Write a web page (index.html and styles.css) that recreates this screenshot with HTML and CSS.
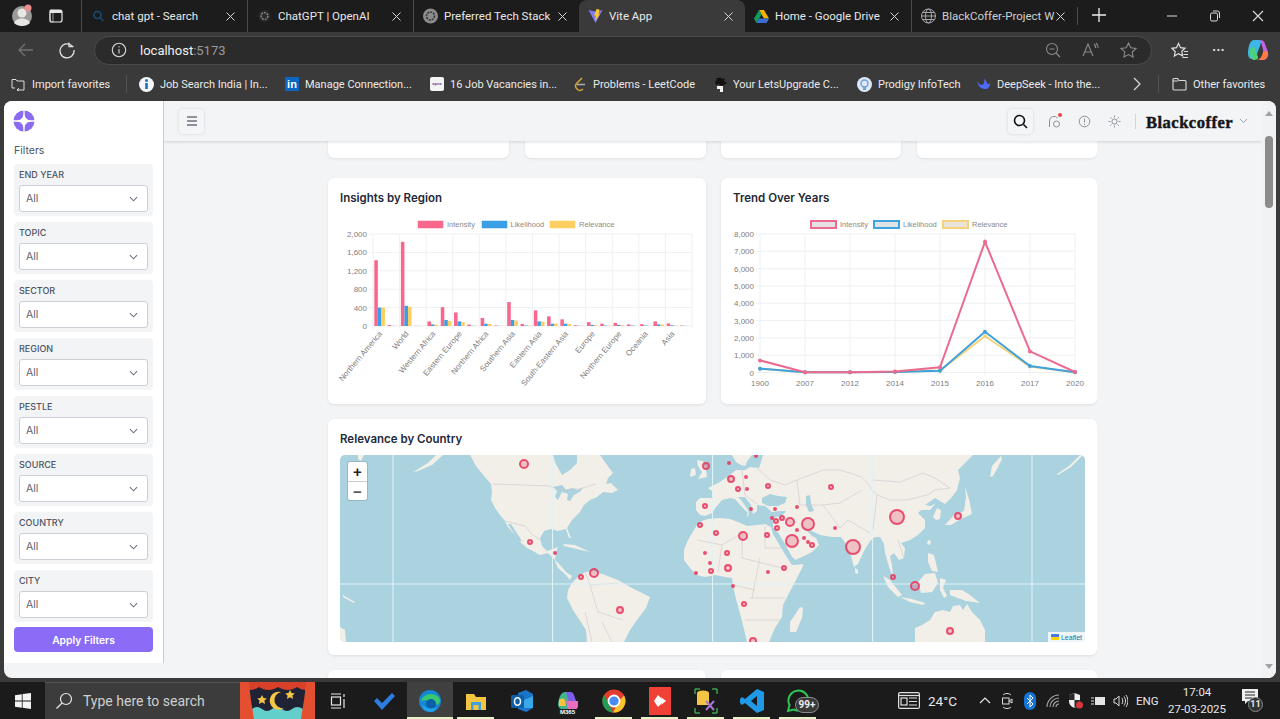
FILE: index.html
```html
<!DOCTYPE html>
<html lang="en">
<head>
<meta charset="utf-8">
<title>Vite App</title>
<link rel="stylesheet" href="styles.css">
</head>
<body>
<div class="tabbar">
  <div class="profile">
    <svg width="22" height="24" viewBox="0 0 22 24"><circle cx="11" cy="13" r="10" fill="#9a9a98"/><circle cx="11" cy="10" r="4.5" fill="#e8e6e4"/><path d="M3 20c2-6 14-6 16 0-4 4-12 4-16 0z" fill="#e8e6e4"/><circle cx="17" cy="5" r="3.5" fill="#ee8d8d"/></svg>
  </div>
  <div class="tabs-btn"><svg width="14" height="14" viewBox="0 0 14 14"><rect x="1" y="1" width="12" height="12" rx="2" fill="none" stroke="#e6e6e6" stroke-width="1.2"/><rect x="1" y="1" width="12" height="3" fill="#e6e6e6"/><rect x="1" y="1" width="3" height="12" fill="none" stroke="#e6e6e6" stroke-width=".6"/></svg></div>
  <div class="tab">
    <svg class="fav" width="14" height="14" viewBox="0 0 14 14"><circle cx="6" cy="6" r="3.5" fill="none" stroke="#1b4a70" stroke-width="1.6"/><path d="M9 9l3 3" stroke="#1b4a70" stroke-width="1.6"/></svg>
    <span class="tab-title">chat gpt - Search</span><svg class="tab-x" width="9" height="9" viewBox="0 0 9 9"><path d="M.5 .5l8 8M8.500 .5l-8 8" stroke="#d8d8d8"/></svg>
  </div>
  <div class="tab">
    <svg class="fav" width="14" height="14" viewBox="0 0 14 14"><circle cx="7" cy="7" r="6" fill="#2b2b2b"/><circle cx="7" cy="7" r="3.4" fill="none" stroke="#8c8c8c" stroke-width="1.4" stroke-dasharray="2 1"/></svg>
    <span class="tab-title">ChatGPT | OpenAI</span><svg class="tab-x" width="9" height="9" viewBox="0 0 9 9"><path d="M.5 .5l8 8M8.500 .5l-8 8" stroke="#d8d8d8"/></svg>
  </div>
  <div class="tab">
    <svg class="fav" width="16" height="16" viewBox="0 0 16 16"><circle cx="8" cy="8" r="7.5" fill="#8b8b8b"/><circle cx="8" cy="8" r="4" fill="none" stroke="#333" stroke-width="1.5" stroke-dasharray="2 1"/></svg>
    <span class="tab-title">Preferred Tech Stack</span><svg class="tab-x" width="9" height="9" viewBox="0 0 9 9"><path d="M.5 .5l8 8M8.500 .5l-8 8" stroke="#d8d8d8"/></svg>
  </div>
  <div class="tab tab-active">
    <svg class="fav" width="16" height="16" viewBox="0 0 16 16"><path d="M1 2l7 1.4L15 2 8 15z" fill="#7c7cf0"/><path d="M9 1l3 .6-1 5 1.500-.4L7.500 13l1-5.500-2 .4z" fill="#ffc82a"/></svg>
    <span class="tab-title">Vite App</span><svg class="tab-x" width="9" height="9" viewBox="0 0 9 9"><path d="M.5 .5l8 8M8.500 .5l-8 8" stroke="#d8d8d8"/></svg>
  </div>
  <div class="tab tab-drive">
    <svg class="fav" width="16" height="15" viewBox="0 0 16 15"><path d="M5.500 1h5l5 8.500h-5z" fill="#f4b400"/><path d="M5.500 1L.5 9.500 3 14l5-8.500z" fill="#0f9d58"/><path d="M3 14h10l2.500-4.500h-10z" fill="#3a6fd8"/></svg>
    <span class="tab-title">Home - Google Drive</span><svg class="tab-x" width="9" height="9" viewBox="0 0 9 9"><path d="M.5 .5l8 8M8.500 .5l-8 8" stroke="#d8d8d8"/></svg>
  </div>
  <div class="tab">
    <svg class="fav" width="16" height="16" viewBox="0 0 16 16" fill="none" stroke="#a8a8a8" stroke-width="1"><circle cx="8" cy="8" r="7"/><ellipse cx="8" cy="8" rx="3" ry="7"/><path d="M1 8h14M2 4.500h12M2 11.500h12"/></svg>
    <span class="tab-title tab-fade">BlackCoffer-Project W</span><svg class="tab-x" width="9" height="9" viewBox="0 0 9 9"><path d="M.5 .5l8 8M8.500 .5l-8 8" stroke="#d8d8d8"/></svg>
  </div>
  <div class="new-tab"><svg width="16" height="16" viewBox="0 0 16 16"><path d="M8 1v14M1 8h14" stroke="#eee" stroke-width="1.300"/></svg></div>
  <div class="win-btns">
    <svg width="12" height="12" viewBox="0 0 12 12"><path d="M1 6h10" stroke="#ddd"/></svg>
    <svg width="12" height="12" viewBox="0 0 12 12" fill="none" stroke="#ddd"><rect x="1.500" y="3" width="7" height="8" rx="1.500"/><path d="M4 1h4.500a2 2 0 0 1 2 2v5"/></svg>
    <svg width="12" height="12" viewBox="0 0 12 12"><path d="M1 1l10 10M11 1L1 11" stroke="#ddd" stroke-width="1.100"/></svg>
  </div>
</div>

<div class="toolbar">
  <svg class="tool-ico back" width="18" height="18" viewBox="0 0 18 18" fill="none" stroke="#717171" stroke-width="1.300"><path d="M16 9H2M8 3L2 9l6 6"/></svg>
  <svg class="tool-ico reload" width="18" height="18" viewBox="0 0 18 18" fill="none" stroke="#e2e2e2" stroke-width="1.300"><path d="M14.500 5.500A7 7 0 1 0 16 9"/><path d="M11 1.500v4.200h4.500"/></svg>
  <div class="address">
    <svg width="16" height="16" viewBox="0 0 16 16" fill="none" stroke="#d8d8d8" stroke-width="1.100"><circle cx="8" cy="8" r="6.700"/><path d="M8 7v4.500M8 4.300v1.300"/></svg>
    <span class="url"><b>localhost</b>:5173</span>
    <span class="addr-spacer"></span>
    <svg class="addr-ico" width="16" height="16" viewBox="0 0 16 16" fill="none" stroke="#8a8a8a" stroke-width="1.100"><circle cx="7" cy="7" r="5.500"/><path d="M11 11l4 4M4.500 7h5"/></svg>
    <svg class="addr-ico" width="17" height="16" viewBox="0 0 17 16" fill="none" stroke="#8a8a8a" stroke-width="1.100"><path d="M1 14L6 2l5 12M3 10h6M12 2a4 4 0 0 1 1.500 4M14 1a6 6 0 0 1 2 5"/></svg>
    <svg class="addr-ico" width="17" height="16" viewBox="0 0 17 16" fill="none" stroke="#8a8a8a" stroke-width="1.100"><path d="M8.500 1l2.300 4.700 5.200.7-3.800 3.600.9 5.100-4.600-2.500L3.900 15l.9-5.100L1 6.400l5.200-.7z"/></svg>
  </div>
  <svg class="tool-ico favs" width="18" height="17" viewBox="0 0 18 17" fill="none" stroke="#e2e2e2" stroke-width="1.200"><path d="M7.500 1.500l2 4.200 4.500.6-3.200 3 .8 4.500-4.100-2.200L3.400 14l.8-4.500L1 6.300l4.500-.6zM13 9.500h4M12.500 12.500h4.500M11.500 15.500h5.500"/></svg>
  <span class="more">···</span>
  <svg class="copilot" width="22" height="22" viewBox="0 0 22 22"><path d="M7 1h5c3 0 2 3 1 6l-3 8c-1 3-3 5-5 5-3 0-4-3-4-6 0-6 2-13 6-13z" fill="#3fb6e8"/><path d="M3 12c0-4 3-5 5-3l3 9c1 2-2 3-4 3-3 0-4-4-4-9z" fill="#4cd07d"/><path d="M13 1c3 0 4 1 5 4l3 8c1 4-1 8-5 8h-5c2 0 4-2 5-5 1-5-1-9-3-15z" fill="#c264e8"/><path d="M10 21h6c3 0 5-3 5-7 0-2-3-3-5-1-1 4-3 8-6 8z" fill="#ff7a45"/></svg>
</div>

<div class="bookmarks">
  <div class="bm bm-import"><svg width="14" height="14" viewBox="0 0 14 14" fill="none" stroke="#dcdcdc" stroke-width="1"><path d="M1 11V2.500h4l1 1.500h7v4M1 11h3M13 8v5H6M8 11l-2 2 2 1"/></svg><span>Import favorites</span></div>
  <i class="bm-sep"></i>
  <div class="bm bm-job"><svg width="15" height="15" viewBox="0 0 15 15"><circle cx="7.500" cy="7.500" r="7.500" fill="#f4f6fb"/><path d="M7.500 6v6" stroke="#1a73c8" stroke-width="2.600"/><circle cx="7.500" cy="3.600" r="1.500" fill="#1a73c8"/></svg><span>Job Search India | In...</span></div>
  <div class="bm bm-in"><span class="in-logo">in</span><span>Manage Connection...</span></div>
  <div class="bm bm-apna"><span class="apna-logo">apna</span><span>16 Job Vacancies in...</span></div>
  <div class="bm bm-lc"><svg width="13" height="15" viewBox="0 0 13 15" fill="none" stroke-width="1.600"><path d="M8 1L3 6c-2 2-2 4 0 6s4 2 6 0" stroke="#d8a13a"/><path d="M3 7.500h8" stroke="#aaa"/></svg><span>Problems - LeetCode</span></div>
  <div class="bm bm-lu"><svg width="14" height="15" viewBox="0 0 14 15"><path d="M7 0l2 2 3-1-1 3 3 2-3 2-3 1-2-2-3 1-1-3 2-2-1-2 3 0z" fill="#111"/><path d="M4 9h6v6H7v-3H4z" fill="#f2f2f2"/></svg><span>Your LetsUpgrade C...</span></div>
  <div class="bm bm-pr"><svg width="15" height="15" viewBox="0 0 15 15"><circle cx="7.500" cy="7.500" r="7.500" fill="#dfe8f5"/><circle cx="7.500" cy="6.500" r="3.500" fill="none" stroke="#6f9fd8" stroke-width="1.400"/><path d="M6 10h3v3H6z" fill="#6f9fd8"/></svg><span>Prodigy InfoTech</span></div>
  <div class="bm bm-ds"><svg width="15" height="13" viewBox="0 0 15 13"><path d="M1 3c1 5 4 8 8 8 3 0 5-2 5-6-1 1-2 1-3 1 0-2-1-4-3-5 1 3 0 5-2 6C4 7 2 5 1 3z" fill="#4d6bfe"/></svg><span>DeepSeek - Into the...</span></div>
  <svg class="bm-more" width="10" height="14" viewBox="0 0 10 14"><path d="M2 1l6 6-6 6" fill="none" stroke="#d5d5d5" stroke-width="1.300"/></svg>
  <i class="bm-sep bm-sep2"></i>
  <div class="bm bm-other"><svg width="15" height="14" viewBox="0 0 15 14" fill="none" stroke="#dcdcdc" stroke-width="1.100"><path d="M1 12V2.500a1 1 0 0 1 1-1h3.500L7 3.500h6a1 1 0 0 1 1 1V12a1 1 0 0 1-1 1H2a1 1 0 0 1-1-1zM1 4h5"/></svg><span>Other favorites</span></div>
</div>

<div class="page">
  <aside class="sidebar">
    <svg class="logo" width="22" height="22" viewBox="0 0 22 22"><circle cx="11" cy="11" r="10.500" fill="#8b6cf0"/><path d="M11 3c.9 5 3 7.100 8 8-5 .9-7.100 3-8 8-.9-5-3-7.100-8-8 5-.9 7.100-3 8-8z" fill="#fff"/><path d="M0 11h22M11 0v22" stroke="#fff" stroke-width="1.300"/></svg>
    <div class="filters-title">Filters</div>
    <div class="filter-list">
      <div class="filter"><label>End Year</label><div class="select">All<svg width="9" height="6" viewBox="0 0 10 6"><path d="M1 1l4 4 4-4" fill="none" stroke="#6b7280" stroke-width="1.200"/></svg></div></div>
      <div class="filter"><label>Topic</label><div class="select">All<svg width="9" height="6" viewBox="0 0 10 6"><path d="M1 1l4 4 4-4" fill="none" stroke="#6b7280" stroke-width="1.200"/></svg></div></div>
      <div class="filter"><label>Sector</label><div class="select">All<svg width="9" height="6" viewBox="0 0 10 6"><path d="M1 1l4 4 4-4" fill="none" stroke="#6b7280" stroke-width="1.200"/></svg></div></div>
      <div class="filter"><label>Region</label><div class="select">All<svg width="9" height="6" viewBox="0 0 10 6"><path d="M1 1l4 4 4-4" fill="none" stroke="#6b7280" stroke-width="1.200"/></svg></div></div>
      <div class="filter"><label>Pestle</label><div class="select">All<svg width="9" height="6" viewBox="0 0 10 6"><path d="M1 1l4 4 4-4" fill="none" stroke="#6b7280" stroke-width="1.200"/></svg></div></div>
      <div class="filter"><label>Source</label><div class="select">All<svg width="9" height="6" viewBox="0 0 10 6"><path d="M1 1l4 4 4-4" fill="none" stroke="#6b7280" stroke-width="1.200"/></svg></div></div>
      <div class="filter"><label>Country</label><div class="select">All<svg width="9" height="6" viewBox="0 0 10 6"><path d="M1 1l4 4 4-4" fill="none" stroke="#6b7280" stroke-width="1.200"/></svg></div></div>
      <div class="filter"><label>City</label><div class="select">All<svg width="9" height="6" viewBox="0 0 10 6"><path d="M1 1l4 4 4-4" fill="none" stroke="#6b7280" stroke-width="1.200"/></svg></div></div>
    </div>
    <button class="apply">Apply Filters</button>
  </aside>

  <div class="main">
    <header class="topbar">
      <div class="icon-btn menu-btn"><svg width="12" height="10" viewBox="0 0 12 10"><path d="M1 1h10M1 5h10M1 9h10" stroke="#6b7280" stroke-width="1.300"/></svg></div>
      <span class="top-spacer"></span>
      <div class="icon-btn search-btn"><svg width="15" height="15" viewBox="0 0 15 15" fill="none" stroke="#111" stroke-width="1.600"><circle cx="6.500" cy="6.500" r="5"/><path d="M10.500 10.500l3.500 3.500"/></svg></div>
      <div class="plain-ico notif"><svg width="13" height="13" viewBox="0 0 13 13" fill="none" stroke="#8a9099" stroke-width="1"><path d="M1.500 12V6a4.500 4.500 0 0 1 8-3"/><rect x="5.500" y="6" width="6" height="6" rx="3"/></svg><i class="dot"></i></div>
      <div class="plain-ico info"><svg width="13" height="13" viewBox="0 0 13 13" fill="none" stroke="#8a9099" stroke-width="1"><circle cx="6.500" cy="6.500" r="5.300"/><path d="M6.500 3.500v4M6.500 8.800v1"/></svg></div>
      <div class="plain-ico sun"><svg width="13" height="13" viewBox="0 0 13 13" fill="none" stroke="#8a9099" stroke-width="1"><circle cx="6.500" cy="6.500" r="2.600"/><path d="M6.500 .5v1.800M6.500 10.700v1.800M.5 6.500h1.800M10.700 6.500h1.800M2.300 2.300l1.200 1.200M9.500 9.500l1.200 1.200M2.300 10.700l1.200-1.200M9.500 3.500l1.200-1.200"/></svg></div>
      <i class="top-sep"></i>
      <div class="brand">Blackcoffer</div>
      <svg class="brand-chev" width="9" height="6" viewBox="0 0 9 6"><path d="M1 1l3.500 3.500L8 1" fill="none" stroke="#9ca3af" stroke-width="1"/></svg>
    </header>

    <div class="content">
      <div class="stats"><div class="card stat"></div><div class="card stat"></div><div class="card stat"></div><div class="card stat"></div></div>
      <div class="chart-row">
        <section class="card chart-card">
          <h2>Insights by Region</h2>
          <svg id="barChart" class="chart" width="354" height="190" viewBox="340 210 354 190"></svg>
        </section>
        <section class="card chart-card">
          <h2>Trend Over Years</h2>
          <svg id="lineChart" class="chart" width="352" height="190" viewBox="733 210 352 190"></svg>
        </section>
      </div>
      <section class="card map-card">
        <h2>Relevance by Country</h2>
        <div class="map">
          <svg id="mapSvg" class="map-svg" width="745" height="187" viewBox="340 455 745 187">
            <g class="land">
              <path d="M358 455L364 455L361 461L358 459ZM413 472L428 463L436 455L443 455L432 465L418 471ZM340 627L345 630L346 642L340 642ZM343 595L355 602L354 603L343 597ZM1057 474L1069 466L1080 455L1083 455L1071 467L1058 475Z"/>
              <path d="M470 455L476 466L484 476L491 484L492 492L491 500L495 508L500 515L505 521L508 527L514 534L520 542L527 548L533 551L540 555L548 553L553 558L560 565L566 572L572 576L570 580L565 574L558 568L555 561L556 552L558 547L553 549L547 551L542 546L540 538L544 531L551 529L558 531L566 529L569 538L571 538L567 528L572 520L580 512L584 505L590 500L597 497L603 492L612 493L618 490L611 483L606 484L608 478L613 473L607 465L600 455Z"/>
              <path d="M563 544L575 545L590 552L577 549L564 546Z"/>
              <path d="M568 590L572 583L578 577L585 572L594 571L605 575L618 580L630 587L650 597L646 608L637 620L630 630L624 642L587 642L586 630L573 610L567 598Z"/>
              <path d="M697 460L703 461L706 470L707 477L698 479L702 472L698 466ZM691 469L695 468L696 475L690 477ZM732 455L752 455L748 460L745 466L741 465L736 462Z"/>
              <path d="M763 455L761 462L759 468L750 467L745 470L736 470L731 474L727 477L720 482L712 486L708 488L713 492L713 498L700 498L696 502L696 510L700 515L705 516L712 513L716 507L722 500L730 498L735 499L741 506L748 513L746 517L749 515L748 510L741 500L738 497L745 497L751 505L753 514L757 511L757 505L765 506L772 512L780 511L786 511L782 516L775 517L773 522L773 527L779 534L785 544L791 555L795 560L802 557L812 552L819 545L816 538L812 536L807 531L799 527L812 531L820 535L832 537L841 537L846 544L851 556L854 567L858 564L864 551L870 541L875 537L880 537L884 544L885 553L890 570L893 576L892 565L890 556L894 553L899 560L904 558L905 548L901 543L910 540L918 535L925 528L925 520L918 513L921 510L930 510L936 503L931 506L925 505L935 498L945 504L952 497L957 490L960 478L958 470L965 463L973 455Z"/>
              <path d="M771 527L765 524L757 525L747 526L738 522L730 519L720 518L708 519L702 521L697 525L692 533L688 540L684 550L684 560L690 568L697 575L705 577L715 575L725 577L732 578L733 585L735 595L739 610L743 625L747 642L769 642L775 628L782 617L783 605L788 595L796 580L803 566L803 564L795 565L792 565L786 556L780 546L773 534Z"/>
              <path d="M790 632L790 622L800 607L803 608L802 618L796 632ZM855 568L858 570L858 574L855 573ZM937 508L941 510L940 519L936 520L933 517ZM945 525L955 514L964 511L966 497L965 487L969 499L972 514L961 519L951 525ZM990 477L992 466L1001 456L1002 459L997 469L993 476ZM928 540L931 541L930 545L927 544Z"/>
              <path d="M883 576L890 580L902 595L898 597L888 587ZM918 582L925 574L935 573L938 583L932 592L921 593ZM940 578L946 580L943 588L947 596L944 598L940 590ZM900 597L912 599L925 603L923 605L910 602ZM950 590L962 590L970 595L980 603L966 601L950 595ZM928 553L934 555L938 572L932 571L928 562Z"/>
              <path d="M915 628L922 625L930 620L935 612L943 610L950 612L953 606L960 605L963 610L967 604L972 612L980 620L985 630L985 642L915 642Z"/>
            </g>
            <g class="water">
              <path d="M553 455L577 455L577 463L570 470L562 475L558 468L555 462ZM553 487L562 485L566 490L572 488L578 490L583 487L581 491L574 495L570 501L567 500L568 494L562 492L558 500L555 497L557 491ZM508 524L511 524L522 541L519 542ZM762 498L770 494L778 496L787 497L785 503L778 506L768 506L762 503ZM806 496L810 495L811 503L814 511L809 512L806 505Z"/>
            </g>
            <g class="borders">
              <path d="M493 484L550 486L560 490L572 489L580 489L596 484M505 521L525 526L533 535L541 540M873 480L900 482L923 473L935 478L950 488L935 490L927 495L907 500L890 500L877 495L862 477L840 470L823 470L797 480M797 480L800 505M823 505L840 528L848 520L870 533M877 495L873 530M898 540L904 558M800 505L823 505L840 503L862 490M742 470L745 495M757 468L770 480L785 485L797 480M745 495L757 504M697 540L722 545L742 533M722 545L718 572M742 533L742 558L782 568M765 526L765 548L786 548M760 558L752 598M750 598L785 598M745 620L780 620M733 585L755 590M590 585L598 612L623 620M585 612L592 642M602 622L612 642M585 572L590 585L618 583"/>
            </g>
            <g class="tile-lines">
              <path d="M393 455v187M552.500 455v187M712.500 455v187M872.500 455v187M1032 455v187M340 584h745"/>
            </g>
            <g id="markers"></g>
          </svg>
          <div class="zoom-ctl"><span>+</span><span>−</span></div>
          <div class="attrib"><svg width="8" height="6" viewBox="0 0 8 6"><rect width="8" height="3" fill="#4c7be0"/><rect y="3" width="8" height="3" fill="#ffd500"/></svg><span>Leaflet</span></div>
        </div>
      </section>
      <div class="chart-row"><div class="card stub"></div><div class="card stub"></div></div>
    </div>
  </div>

  <div class="scrollbar">
    <svg width="8" height="5" viewBox="0 0 8 5"><path d="M0 5l4-5 4 5z" fill="#a3a3a3"/></svg>
    <i class="thumb"></i>
    <svg class="sb-down" width="8" height="5" viewBox="0 0 8 5"><path d="M0 0l4 5 4-5z" fill="#a3a3a3"/></svg>
  </div>
</div>

<footer class="taskbar">
  <div class="start"><svg width="16" height="16" viewBox="0 0 16 16" fill="#f4f4f4"><path d="M0 2.200l6.800-1v6.300H0zM7.600 1l8.400-1v7.500H7.600zM0 8.400h6.800v6.400L0 13.800zM7.600 8.400H16V16l-8.400-1.200z"/></svg></div>
  <div class="task-search"><svg width="18" height="18" viewBox="0 0 18 18" fill="none" stroke="#e8e8e8" stroke-width="1.200"><circle cx="11" cy="7" r="5.500"/><path d="M7 11l-5.500 5.500"/></svg><span>Type here to search</span></div>
  <svg class="theater" width="75" height="37" viewBox="0 0 75 37">
    <rect width="75" height="37" fill="#1f2334"/>
    <path d="M0 28c8 2 8 5 14 9h48c5-4 6-7 13-9v9H0z" fill="#5dc9c4"/>
    <path d="M12 27q5-4 10 0t10 0 10 0 10 0 11 0v10H12z" fill="#63cfca"/>
    <path d="M0 0h75v5c-7 4-12 4-18 0-6 4-12 4-19 0-6 4-13 4-19 0-6 4-13 4-19 0z" fill="#d8402a"/>
    <path d="M0 0h9c1 14 3 24 5 37H0zM75 0h-9c-1 14-3 24-5 37h14z" fill="#e4502f"/>
    <path d="M41 10a9 9 0 1 0 3 16 8 8 0 0 1-3-16z" fill="#f6c744"/>
    <path d="M22 13l1.500 3 3.300.4-2.400 2.200.6 3.300-3-1.600-3 1.600.6-3.300-2.400-2.200 3.300-.4zM50 8l1.500 3 3.300.4-2.400 2.200.6 3.300-3-1.600-3 1.600.6-3.300-2.400-2.200 3.300-.4z" fill="#f6c744"/>
  </svg>
  <div class="task-cell taskview"><svg width="16" height="16" viewBox="0 0 16 16" fill="none" stroke="#e8e8e8" stroke-width="1.200"><path d="M1 1h10M1 15h10"/><rect x="1.500" y="4" width="9" height="8"/><path d="M14 1v3M14 6v9"/></svg></div>
  <div class="task-cell running-none"><svg width="24" height="20" viewBox="0 0 24 20"><path d="M2 10l3-3 5 5L20 2l3 3-13 14z" fill="#2d7ce0"/></svg></div>
  <div class="task-cell active on"><svg width="24" height="24" viewBox="0 0 24 24"><circle cx="12" cy="12" r="11" fill="#1486d6"/><path d="M3 14C3 8 8 5 13 5c5 0 9 3 9 7 0 3-3 4-6 4-2 0-3-1-3-2 0-3-10-4-10 0z" fill="#36c96f"/><circle cx="13" cy="15" r="5" fill="#0c5fa8"/><path d="M13 23c-5 0-9-3-9-8 3 4 9 6 15 3-1 3-3 5-6 5z" fill="#1fa0e8"/></svg></div>
  <div class="task-cell on"><svg width="22" height="20" viewBox="0 0 22 20"><path d="M1 3h8l2 3h10v13H1z" fill="#f4c542"/><rect x="6" y="11" width="10" height="8" fill="#3fa0dc"/><rect x="8.500" y="14" width="5" height="5" fill="#f4c542"/></svg></div>
  <div class="task-cell"><svg width="24" height="22" viewBox="0 0 24 22"><path d="M8 3l8-3 7 4v14l-7 4-8-3z" fill="#1a74c8"/><path d="M14 10l9-4v12h-9z" fill="#37a8e8"/><rect x="1" y="5" width="13" height="13" rx="1.500" fill="#0f5fa8"/><ellipse cx="7.500" cy="11.500" rx="3" ry="3.800" fill="none" stroke="#fff" stroke-width="1.500"/></svg></div>
  <div class="task-cell m365"><svg width="24" height="18" viewBox="0 0 24 18"><path d="M9 0h5l4 18h-8C5 18 2 16 2 12 3 5 5 0 9 0z" fill="#3fb38a"/><path d="M10 0h4c3 0 4 2 5 6l3 8h-8z" fill="#7c5fe8"/><path d="M10 9h12v5c0 2-2 4-4 4h-6z" fill="#e86fc0"/><path d="M3 8c2-2 5-2 6 0l1 6H3z" fill="#f4c542"/></svg><b>M365</b></div>
  <div class="task-cell on"><svg width="24" height="24" viewBox="0 0 24 24"><circle cx="12" cy="12" r="11.500" fill="#e33b2e"/><path d="M22 6.500A11.500 11.500 0 0 1 11 23.500L17 12z" fill="#f7c52b"/><path d="M11 23.500A11.500 11.500 0 0 1 2 6l5 9z" fill="#1e9d55"/><circle cx="12" cy="12" r="5.500" fill="#4a8af4" stroke="#fff" stroke-width="1.800"/></svg></div>
  <div class="task-cell on"><span class="red-app"><svg width="14" height="14" viewBox="0 0 14 14"><path d="M5 1l6 6-6 6-4-6z" fill="#fff"/><path d="M8 3l5 4-5 4 2-4z" fill="#fff"/></svg></span></div>
  <div class="task-cell on"><svg width="24" height="26" viewBox="0 0 24 26"><path d="M1 1v5M1 1h5M23 1v5M23 1h-5M1 25v-5M1 25h5M23 25v-5M23 25h-5" stroke="#3fa34d" stroke-width="1.500" fill="none"/><ellipse cx="9" cy="5" rx="6" ry="2.500" fill="#f4c542"/><rect x="3" y="5" width="12" height="12" fill="#f4c542"/><path d="M12 13l8 9M20 13l-8 9" stroke="#a878d8" stroke-width="2"/></svg></div>
  <div class="task-cell on"><svg width="24" height="24" viewBox="0 0 24 24"><path d="M17 0l7 3v18l-7 3L5 14l-3 2-2-2v-4l2-2 3 2zM17 7l-6 5 6 5z" fill="#1f9ae8"/></svg></div>
  <div class="task-cell on whatsapp"><svg width="24" height="24" viewBox="0 0 24 24"><path d="M2 22l1.500-6A10 10 0 1 1 8 20.500z" fill="none" stroke="#2dc653" stroke-width="2"/></svg><span class="wa-badge">99+</span></div>
  <span class="task-spacer"></span>
  <div class="tray">
    <svg class="tray-news" width="22" height="17" viewBox="0 0 22 17" fill="none" stroke="#e0e0e0" stroke-width="1.200"><rect x=".6" y=".6" width="20.800" height="15.800" rx="1.500"/><path d="M.6 3.500h20.800"/><rect x="3" y="6" width="6" height="7"/><path d="M11 6h8M11 9.500h8M11 13h8"/></svg>
    <span class="temp">24°C</span>
    <svg class="caret" width="12" height="7" viewBox="0 0 12 7"><path d="M1 6l5-5 5 5" fill="none" stroke="#e8e8e8" stroke-width="1.200"/></svg>
    <svg class="t-ico ti-meet" width="12" height="18" viewBox="0 0 12 18" fill="none" stroke="#ddd" stroke-width="1"><path d="M2 3c2-2 6-2 8 0M2 15c2 2 6 2 8 0"/><rect x="1.500" y="6" width="6.500" height="6"/><path d="M8 9l3-2v4z"/></svg>
    <svg class="t-ico ti-bt" width="12" height="18" viewBox="0 0 12 18"><rect width="12" height="18" rx="6" fill="#1574d4"/><path d="M3 6l6 6-3 3V3l3 3-6 6" fill="none" stroke="#fff"/></svg>
    <svg class="t-ico ti-wifi" width="14" height="14" viewBox="0 0 14 14" fill="none" stroke="#aaa" stroke-width="1.100"><path d="M1 13A12 12 0 0 1 13 1M4 13a9 9 0 0 1 9-9M7 13a6 6 0 0 1 6-6M10 13a3 3 0 0 1 3-3"/></svg>
    <svg class="t-ico ti-shield" width="15" height="17" viewBox="0 0 15 17"><path d="M6.500 1L12 3v6c0 4-3 6-5.500 7C4 15 1 13 1 9V3z" fill="#f0f0f0"/><path d="M6.500 1v7H1V3zM6.500 8H12c0 4-3 7-5.500 8z" fill="#2a2a2a"/><circle cx="11.500" cy="13" r="3.500" fill="#d9363e"/></svg>
    <svg class="t-ico ti-batt" width="16" height="12" viewBox="0 0 16 12"><rect x="5" y="2" width="10" height="8" fill="#e4e4e4"/><path d="M1 3h3M1 6h3M1 9h3" stroke="#ddd"/></svg>
    <svg class="t-ico ti-vol" width="15" height="14" viewBox="0 0 15 14" fill="none" stroke="#ddd" stroke-width="1"><path d="M1 5h2l3-3v10L3 9H1zM9 4c1 2 1 4 0 6M11 2.500c2 3 2 6 0 9M13 1c2.500 4 2.500 8 0 12"/></svg>
    <span class="lang">ENG</span>
    <div class="clock"><span>17:04</span><span>27-03-2025</span></div>
    <div class="notify"><svg width="16" height="15" viewBox="0 0 16 15"><path d="M0 0h16v12H6l-3 3v-3H0z" fill="#efefef"/><path d="M3 3h10M3 6h10M3 9h7" stroke="#222"/></svg><span class="notify-badge">11</span></div>
  </div>
</footer>
<script src="app.js"></script>
</body>
</html>
```

FILE: styles.css
```css
* { box-sizing: border-box; }
html, body { margin: 0; height: 100%; overflow: hidden; }
body {
  width: 1280px; height: 719px; display: flex; flex-direction: column;
  background: #3a3a3a; font-family: Inter, "Noto Sans", sans-serif; color: #1f2937;
}

/* browser tabs */
.tabbar { height: 32px; background: #1c1c1c; display: flex; align-items: center; color: #e8e8e8; font: 11.5px Roboto, sans-serif; flex: none; }
.profile { width: 44px; padding-left: 11px; display: flex; align-self: flex-start; padding-top: 3px; }
.tabs-btn { width: 37px; padding-left: 5px; display: flex; }
.tab { width: 166px; height: 32px; display: flex; align-items: center; padding: 0 12px 0 8px; border-left: 1px solid #4a4a4a; background-clip: padding-box; }
.tab .fav { flex: none; width: 17px; margin-right: 5px; }
.tab-title { flex: 1; white-space: nowrap; overflow: hidden; }
.tab-fade { color: #cfcfcf; }
.tab-x { flex: none; }
.tab-active { background: #3a3a3a; border-radius: 8px 8px 0 0; border-left: 0; }
.tab-active + .tab { border-left: 0; }
.new-tab { width: 42px; height: 18px; display: flex; justify-content: center; border-left: 1px solid #4a4a4a; }
.win-btns { margin-left: auto; display: flex; gap: 31px; padding-right: 16px; }

/* browser toolbar */
.toolbar { height: 36px; background: #3a3a3a; display: flex; align-items: center; flex: none; }
.tool-ico { flex: none; }
.back { margin-left: 17px; }
.reload { margin-left: 23px; }
.address { margin-left: 18px; width: 1058px; height: 29px; border-radius: 15px; background: #2b2b2b; border: 1px solid #4c4c4c; display: flex; align-items: center; padding-left: 16px; padding-right: 14px; }
.url { margin-left: 13px; font: 13px Roboto, sans-serif; color: #9a9a9a; }
.url b { color: #f0f0f0; font-weight: 400; }
.addr-spacer { flex: 1; }
.addr-ico { margin-left: 21px; }
.favs { margin-left: 19px; }
.more { margin-left: 23px; color: #ddd; font: bold 14px Roboto, sans-serif; width: 14px; }
.copilot { margin-left: 21px; }

/* bookmarks */
.bookmarks { height: 32px; background: #3a3a3a; display: flex; align-items: center; color: #eaeaea; font: 11px Roboto, sans-serif; flex: none; padding-left: 11px; }
.bm { display: flex; align-items: center; gap: 6px; white-space: nowrap; flex: none; }
.bm-import { width: 100px; gap: 7px; }
.bm-sep { width: 1px; height: 18px; background: #555; margin-left: 15px; flex: none; }
.bm-job { margin-left: 12px; width: 146px; }
.bm-in { width: 145px; }
.bm-apna { width: 144px; }
.bm-lc { width: 139px; }
.bm-lu { width: 144px; }
.bm-pr { width: 119px; }
.bm-ds { width: 156px; }
.bm-more { flex: none; }
.bm-sep2 { margin-left: 16px; }
.bm-other { margin-left: 13px; }
.in-logo { width: 14px; height: 14px; background: #0a66c2; color: #fff; font: bold 11px "Liberation Sans", sans-serif; text-align: center; line-height: 14px; border-radius: 1px; }
.apna-logo { width: 14px; height: 14px; background: #f4f4f4; color: #6b3fa0; font: bold 4px "Liberation Sans", sans-serif; text-align: center; line-height: 14px; border-radius: 2px; }

/* page */
.page { height: 577px; margin: 1px 4px 0 4px; flex: none; background: #f3f4f6; border-radius: 8px; display: flex; overflow: hidden; }
.sidebar { width: 160px; height: 562px; background: #fff; border-right: 1px solid #c9cbd0; padding: 9px 10px 0 10px; flex: none; display: flex; flex-direction: column; }
.logo { display: block; margin-left: -1px; }
.filters-title { font-size: 10.5px; color: #4b5563; margin-top: 12px; line-height: 14px; }
.filter-list { margin-top: 6px; display: flex; flex-direction: column; gap: 6px; }
.filter { height: 52px; background: #f3f4f6; border-radius: 4px; padding: 4px 5px 0; }
.filter label { display: block; font-size: 9px; font-weight: 500; text-transform: uppercase; color: #4b5563; line-height: 13px; height: 17px; }
.select { height: 27px; background: #fff; border: 1px solid #ccd0d6; border-radius: 3px; display: flex; align-items: center; justify-content: space-between; padding: 0 9px 0 6px; font-size: 10.500px; color: #5b6470; }
.apply { margin-top: 5px; height: 25px; width: 139px; border: 0; border-radius: 4px; background: #8b6cf6; color: #fff; font: 600 10.300px Inter, sans-serif; flex: none; }

.main { width: 1098px; flex: none; display: flex; flex-direction: column; overflow: hidden; }
.topbar { height: 40px; flex: none; background: #f3f4f6; box-shadow: 0 1px 3px rgba(0,0,0,.14); display: flex; align-items: center; padding: 0 14px 0 15px; position: relative; z-index: 2; }
.icon-btn { width: 25px; height: 25px; border-radius: 4px; background: #f4f5f7; box-shadow: 0 0 3px rgba(0,0,0,.14); display: flex; align-items: center; justify-content: center; }
.top-spacer { flex: 1; }
.plain-ico { width: 30px; display: flex; justify-content: center; position: relative; }
.notif { margin-left: 6px; }
.dot { position: absolute; width: 4px; height: 4px; border-radius: 50%; background: #ef4444; top: -2px; left: 19px; }
.top-sep { width: 1px; height: 15px; background: #d1d5db; margin-left: 6px; }
.brand { margin-left: 10px; padding-top: 3px; font: 700 16.500px "Liberation Serif", serif; letter-spacing: .5px; color: #161616; width: 90px; -webkit-text-stroke: .45px #161616; }
.brand-chev { margin-left: 3px; }

.content { flex: 1; padding-left: 164px; width: 933px; display: flex; flex-direction: column; gap: 15px; overflow: hidden; }
.card { background: #fff; border-radius: 6px; box-shadow: 0 1px 3px rgba(0,0,0,.09); }
.stats { display: grid; grid-template-columns: 181px 181px 180px 180px; gap: 15.500px; margin-bottom: 5px; }
.stat { height: 17px; border-radius: 0 0 6px 6px; }
.chart-row { display: grid; grid-template-columns: 378px 376px; gap: 15px; flex: none; }
.chart-card { height: 226px; padding: 12px 12px 4px; }
h2 { margin: 0; font-size: 11.500px; line-height: 16px; font-weight: 600; color: #1f2937; }
.chart { display: block; margin-top: 4px; overflow: visible; }
.map-card { height: 236px; padding: 12px; flex: none; }
.map { position: relative; width: 745px; height: 187px; margin-top: 8px; border-radius: 5px; overflow: hidden; background: #aad3df; }
.map-svg { display: block; }
.stub { height: 20px; }
.land path { fill: #f2efe9; }
.water path { fill: #aad3df; }
.borders path { fill: none; stroke: #cfc6cd; stroke-width: .6; }
.tile-lines path { fill: none; stroke: #dff3f7; stroke-width: 1; }
.zoom-ctl { position: absolute; left: 8px; top: 7px; width: 19px; border-radius: 2px; background: #fff; box-shadow: 0 0 0 1px rgba(0,0,0,.12); display: flex; flex-direction: column; }
.zoom-ctl span { height: 19px; font: bold 15px/19px "Liberation Sans", sans-serif; text-align: center; color: #222; }
.zoom-ctl span + span { border-top: 1px solid #ccc; color: #555; }
.attrib { position: absolute; right: 0; bottom: 0; height: 10px; padding: 0 3px; display: flex; align-items: center; gap: 2px; background: rgba(255,255,255,.8); font: 7px "Liberation Sans", sans-serif; color: #0078a8; }

.tick { font: 8px "Liberation Sans", sans-serif; fill: #808080; }
.legend { font: 7.500px "Liberation Sans", sans-serif; fill: #8a8a8a; }

.scrollbar { flex: 1; position: relative; background: #f1f2f4; display: flex; flex-direction: column; align-items: center; padding-top: 10px; }
.thumb { display: block; width: 8px; height: 72px; border-radius: 4px; background: #8b8b8b; margin-top: 20px; }
.sb-down { margin-top: auto; margin-bottom: 9px; }

/* taskbar */
.taskbar { height: 37px; margin-top: 4px; background: #1b1b1b; flex: none; display: flex; align-items: stretch; color: #e8e8e8; }
.start { width: 45px; display: flex; align-items: center; justify-content: center; }
.task-search { width: 195px; background: #3c3c3c; border-top: 1px solid #555; display: flex; align-items: center; padding-left: 10px; font: 14px Roboto, sans-serif; color: #cfcfcf; gap: 10px; }
.theater { flex: none; }
.task-cell { width: 46px; position: relative; display: flex; align-items: center; justify-content: center; flex: none; }
.taskview { margin-right: 1px; }
.running-none { margin-left: -1px; }
.task-cell.active { background: #404040; }
.task-cell.on::after { content: ""; position: absolute; left: 4px; right: 5px; bottom: 0; height: 2px; background: #e6f4c4; }
.task-cell.active.on::after { left: 0; right: 0; }
.m365 b { position: absolute; left: 14px; bottom: 4px; font: bold 6px "Liberation Sans", sans-serif; color: #fff; background: #222; padding: 0 1px; }
.red-app { width: 22px; height: 28px; background: #ef4135; display: flex; align-items: center; justify-content: center; }
.wa-badge { position: absolute; left: 20px; top: 15px; width: 24px; height: 16px; border-radius: 8px; background: #3a3a3a; border: 1px solid #8a8a8a; font: bold 10px/14px Roboto, sans-serif; text-align: center; color: #eee; }
.task-spacer { flex: 1; }
.tray { display: flex; align-items: center; padding-right: 20px; font: 12.500px Roboto, sans-serif; }
.tray-news { flex: none; }
.temp { margin-left: 8px; width: 31px; font-size: 13.500px; flex: none; }
.caret { margin-left: 20px; flex: none; }
.t-ico { flex: none; }
.ti-meet { margin-left: 10px; }
.ti-bt { margin-left: 11px; }
.ti-wifi { margin-left: 10px; }
.ti-shield { margin-left: 7.500px; }
.ti-batt { margin-left: 7.500px; }
.ti-vol { margin-left: 6.500px; }
.lang { margin-left: 8.500px; width: 24px; font-size: 11.500px; flex: none; }
.clock { margin-left: 1px; width: 72px; display: flex; flex-direction: column; align-items: center; gap: 4px; font-size: 11.500px; line-height: 13px; flex: none; }
.notify { margin-left: 7px; position: relative; width: 20px; padding-bottom: 6px; flex: none; padding-left: 2px; }
.notify-badge { position: absolute; left: 8px; top: 8px; width: 15px; height: 15px; border-radius: 50%; background: #333; border: 1px solid #888; font: bold 9px/13px Roboto, sans-serif; text-align: center; }
```

FILE: app.js
```js
const NS = 'http://www.w3.org/2000/svg';
function add(parent, tag, attrs, text) {
  const n = document.createElementNS(NS, tag);
  for (const k in attrs) n.setAttribute(k, attrs[k]);
  if (text !== undefined) n.textContent = text;
  parent.appendChild(n);
  return n;
}
const GRID = '#eef0f2';

function legend(svg, items) {
  for (const it of items) {
    add(svg, 'rect', { x: it.x + (it.hollow ? 1 : 0), y: 221, width: it.w - (it.hollow ? 2 : 0), height: 7, fill: it.fill, stroke: it.stroke, 'stroke-width': it.hollow ? 2 : .5 });
    add(svg, 'text', { x: it.tx, y: 227, class: 'legend' }, it.label);
  }
}

/* Insights by Region */
(function () {
  const svg = document.getElementById('barChart');
  const L = 373, R = 692, T = 234, B = 326, MAX = 2000;
  const y = v => B - v * (B - T) / MAX;
  const data = [
    [1430, 400, 400], [20, 4, 4], [1830, 440, 420], [4, 2, 2], [100, 35, 30], [410, 130, 110],
    [295, 100, 85], [30, 5, 5], [175, 50, 45], [10, 3, 3], [520, 130, 120], [45, 10, 10],
    [340, 100, 95], [210, 50, 50], [145, 50, 45], [15, 5, 5], [85, 25, 20], [50, 10, 10],
    [70, 25, 20], [35, 10, 5], [40, 10, 5], [100, 35, 30], [55, 15, 10], [10, 3, 3]
  ];
  const labels = ['Northern America', 'World', 'Western Africa', 'Eastern Europe', 'Northern Africa', 'Southern Asia', 'Eastern Asia', 'South-Eastern Asia', 'Europe', 'Northern Europe', 'Oceania', 'Asia'];
  const colors = ['#f9688c', '#3a9fe4', '#fdcf62'];
  for (let i = 0; i <= 5; i++) {
    const v = i * 400, yy = y(v);
    add(svg, 'line', { x1: L - 4, x2: R, y1: yy, y2: yy, stroke: GRID });
    add(svg, 'text', { x: L - 6, y: yy + 3, 'text-anchor': 'end', class: 'tick' }, v.toLocaleString('en-US'));
  }
  const step = (R - L) / 24;
  for (let i = 0; i <= 12; i++) {
    const x = L + i * step * 2;
    add(svg, 'line', { x1: x, x2: x, y1: T, y2: B + 3, stroke: GRID });
  }
  data.forEach((vals, i) => {
    vals.forEach((v, s) => {
      add(svg, 'rect', { x: L + i * step + 1.3 + s * 3.55, y: y(v), width: 3.55, height: B - y(v), fill: colors[s] });
    });
  });
  labels.forEach((t, i) => {
    const x = L + (i * 2 + .5) * step + 3, yy = 334;
    add(svg, 'text', { x, y: yy, 'text-anchor': 'end', transform: `rotate(-50 ${x} ${yy})`, class: 'tick' }, t);
  });
  legend(svg, [
    { x: 418, w: 25, fill: '#f9688c', stroke: '#f9688c', tx: 447, label: 'Intensity' },
    { x: 482, w: 25, fill: '#3a9fe4', stroke: '#3a9fe4', tx: 510.500, label: 'Likelihood' },
    { x: 550, w: 25, fill: '#fdcf62', stroke: '#fdcf62', tx: 579, label: 'Relevance' }
  ]);
})();

/* Trend Over Years */
(function () {
  const svg = document.getElementById('lineChart');
  const L = 760, R = 1075, T = 234, B = 372.500, MAX = 8000;
  const y = v => B - v * (B - T) / MAX;
  const years = ['1900', '2007', '2012', '2014', '2015', '2016', '2017', '2020'];
  const step = (R - L) / 7;
  for (let i = 0; i <= 8; i++) {
    const v = i * 1000, yy = y(v);
    add(svg, 'line', { x1: L - 4, x2: R, y1: yy, y2: yy, stroke: GRID });
    add(svg, 'text', { x: L - 6, y: yy + 3, 'text-anchor': 'end', class: 'tick' }, v.toLocaleString('en-US'));
  }
  years.forEach((t, i) => {
    const x = L + i * step;
    add(svg, 'line', { x1: x, x2: x, y1: T, y2: B + 3, stroke: GRID });
    add(svg, 'text', { x, y: 386, 'text-anchor': 'middle', class: 'tick' }, t);
  });
  const series = [
    ['#f6d27c', [220, 10, 10, 30, 110, 2100, 350, 15]],
    ['#3fa2dc', [220, 10, 10, 30, 100, 2350, 370, 15]],
    ['#ec6a8e', [700, 20, 20, 60, 300, 7550, 1220, 30]]
  ];
  for (const [c, vals] of series) {
    const pts = vals.map((v, i) => `${L + i * step},${y(v)}`).join(' ');
    add(svg, 'polyline', { points: pts, fill: 'none', stroke: c, 'stroke-width': 2 });
    vals.forEach((v, i) => add(svg, 'circle', { cx: L + i * step, cy: y(v), r: 2, fill: c }));
  }
  legend(svg, [
    { x: 810, w: 27, fill: '#e6e1e2', stroke: '#ec6a8e', hollow: 1, tx: 840, label: 'Intensity' },
    { x: 873, w: 27, fill: '#dfe3e6', stroke: '#3fa2dc', hollow: 1, tx: 903, label: 'Likelihood' },
    { x: 942, w: 27, fill: '#e8e4da', stroke: '#f6d27c', hollow: 1, tx: 972, label: 'Relevance' }
  ]);
})();

/* Relevance by Country */
(function () {
  const g = document.getElementById('markers');
  const markers = [
    [729,463,2],[731,479,4],[746,477,2],[738,489,3],[747,489,2],[768,486,3],[831,487,3],[751,509,2],
    [775,509,2],[797,507,2],[772,518,2],[776,521,3],[782,518,3],[790,522,5],[808,524,7],[777,528,3],
    [797,530,2],[767,535,3],[743,536,5],[716,533,3],[792,541,7],[804,538,2],[808,542,2],[812,545,3],
    [835,528,2],[853,547,8],[897,517,8],[958,516,4],[727,553,3],[728,568,4],[711,571,3],[710,563,2],
    [768,572,2],[784,568,3],[733,586,2],[744,604,3],[753,641,4],[893,577,3],[915,586,5],[950,631,4],
    [756,456,2],[524,464,5],[706,466,4],[705,506,3],[700,525,3],[530,542,3],[555,553,2],[705,553,2],
    [696,573,2],[581,577,3],[594,573,5],[620,610,4]
  ];
  for (const [cx, cy, r] of markers) {
    add(g, 'circle', { cx, cy, r: r - 1, fill: '#e8365d', 'fill-opacity': .25, stroke: '#e8365d', 'stroke-width': 2, 'stroke-opacity': .85 });
  }
})();
```
